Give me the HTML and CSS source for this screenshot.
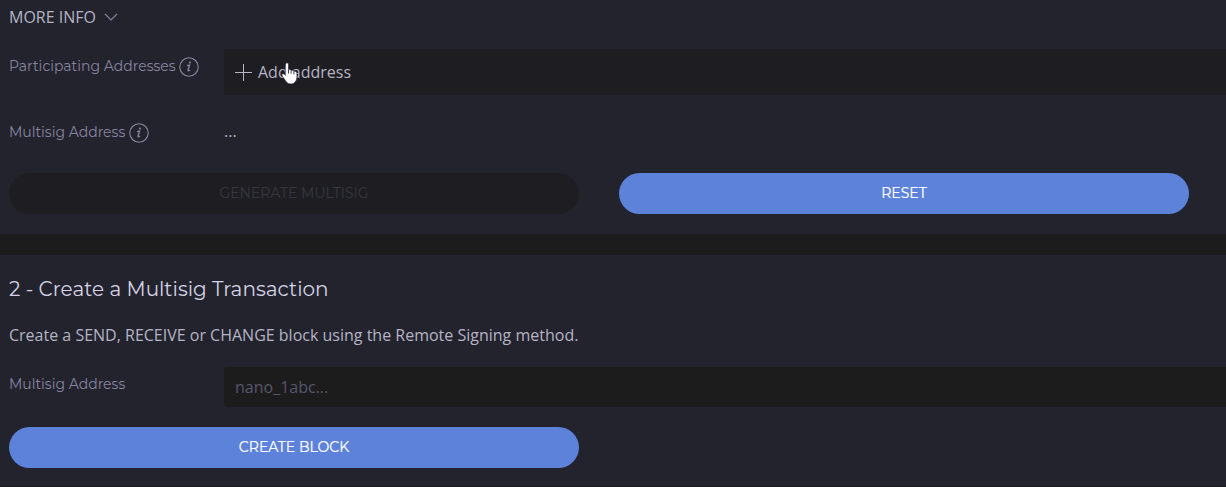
FILE: index.html
```
<!DOCTYPE html>
<html lang="en">
<head>
<meta charset="utf-8">
<title>Multisig</title>
<link rel="stylesheet" href="styles.css">
</head>
<body>
<main class="page">
  <section class="card first">
    <div class="more"><span>MORE INFO</span><svg class="chev" width="14" height="8" viewBox="0 0 14 8"><path d="M1 1l6 6 6-6"/></svg></div>
    <div class="row participants">
      <div class="label"><span>Participating Addresses</span><svg class="info" width="20" height="20" viewBox="0 0 20 20"><circle cx="10" cy="10" r="9.200"/><path class="stem" d="M8 8.600l2.500-.5-1.400 4.800q-.3 1.500 1.900.2"/><circle class="dot" cx="10.900" cy="5.500" r="1.100"/></svg></div>
      <button class="add"><svg class="plus" width="17" height="17" viewBox="0 0 17 17"><path d="M8.500 0v17M0 8.500h17"/></svg><span>Add address</span></button>
    </div>
    <div class="row result">
      <div class="label"><span>Multisig Address</span><svg class="info" width="20" height="20" viewBox="0 0 20 20"><circle cx="10" cy="10" r="9.200"/><path class="stem" d="M8 8.600l2.500-.5-1.400 4.800q-.3 1.500 1.900.2"/><circle class="dot" cx="10.900" cy="5.500" r="1.100"/></svg></div>
      <div class="dots">...</div>
    </div>
    <div class="buttons">
      <button class="btn disabled">GENERATE MULTISIG</button>
      <button class="btn primary">RESET</button>
    </div>
  </section>
  <section class="card second">
    <h2 class="title">2 - Create a Multisig Transaction</h2>
    <p class="desc">Create a SEND, RECEIVE or CHANGE block using the Remote Signing method.</p>
    <div class="row field">
      <div class="label"><span>Multisig Address</span></div>
      <div class="input">nano_1abc...</div>
    </div>
    <button class="btn primary create">CREATE BLOCK</button>
  </section>
  <svg class="cursor" width="18" height="24" viewBox="0 0 18 24"><path d="M4.500 2.500q0-1.700 1.500-1.700t1.500 1.700v5.300q2-.6 2.600.6 2-.5 2.800.8 2.900-.4 3 1.800v4q0 3-1.600 4.800-1.500 2.200-4.300 2.200-3.500 0-5-2.500L1.300 14q-1-2 .4-2.300 1.500-.2 2.800 1.800z"/><path class="fingers" d="M7.500 8v3.500M10.100 8.700v3M12.900 9.500v2.700"/></svg>
</main>
</body>
</html>
```
FILE: styles.css
```
* { box-sizing: border-box; }
body { margin: 0; background: #1c1c1d; font-family: "Open Sans", sans-serif; font-size: 16px; color: #b5b3c5; }
.page { position: relative; width: 1226px; height: 487px; overflow: hidden; }
.card { background: #23232d; padding-left: 9px; }
.first { height: 234px; }
.second { height: 231px; margin-top: 21px; padding-top: 20px; }
.more { display: flex; align-items: center; gap: 8px; height: 34px; }
.chev, .info, .plus { fill: none; stroke: #8784a0; stroke-width: 1.1; flex: none; }
.plus { stroke: #b5b3c5; stroke-width: 1; }
.info { position: relative; top: 1px; }
.info .stem { stroke-width: 1.4; }
.info .dot { fill: #8784a0; stroke: none; }
.row { display: flex; }
.participants { margin-top: 15px; height: 46px; }
.label { display: flex; gap: 3.4px; align-items: center; width: 215px; height: 34px; flex: none; font: 14px/20px Montserrat, "Open Sans", sans-serif; color: #8784a0; }
button { border: 0; margin: 0; font: inherit; color: inherit; }
.add { display: flex; align-items: center; gap: 6px; padding: 0 11px; flex: 1; background: #1e1e22; }
.result { margin-top: 20px; height: 34px; }
.dots { line-height: 32px; }
.buttons { display: flex; gap: 40px; margin-top: 24px; }
.btn { width: 570px; height: 41px; border-radius: 21px; padding: 0 0 1px; font: 14px/20px Montserrat, "Open Sans", sans-serif; }
.btn.disabled { background: #1e1e22; color: #373640; }
.primary { background: #5d82d9; color: #fff; -webkit-text-stroke: .2px #fff; }
.title { margin: 0; font: 400 20px/28px Montserrat, "Open Sans", sans-serif; letter-spacing: .03px; color: #d4d2e4; }
.desc { margin: 20px 0 0; line-height: 24px; }
.field { margin-top: 20px; }
.input { flex: 1; height: 40px; padding-left: 11px; line-height: 40px; background: #1c1c1d; color: #58566b; border-radius: 4px 0 0 4px; }
.create { display: block; margin-top: 20px; }
.cursor { position: absolute; left: 281px; top: 62px; fill: #fff; stroke: #15151b; stroke-width: .5; }
.cursor .fingers { fill: none; stroke-width: .8; }
```
